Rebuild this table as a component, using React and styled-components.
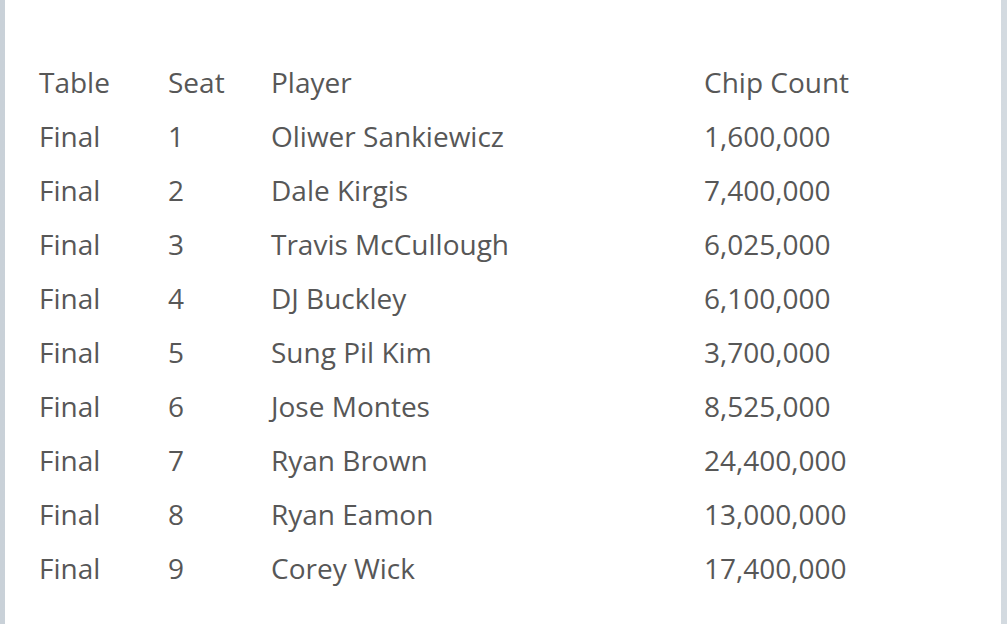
import React from "react"
import styled, { createGlobalStyle } from "styled-components"

const rows = [
  ["Final", "1", "Oliwer Sankiewicz", "1,600,000"],
  ["Final", "2", "Dale Kirgis", "7,400,000"],
  ["Final", "3", "Travis McCullough", "6,025,000"],
  ["Final", "4", "DJ Buckley", "6,100,000"],
  ["Final", "5", "Sung Pil Kim", "3,700,000"],
  ["Final", "6", "Jose Montes", "8,525,000"],
  ["Final", "7", "Ryan Brown", "24,400,000"],
  ["Final", "8", "Ryan Eamon", "13,000,000"],
  ["Final", "9", "Corey Wick", "17,400,000"],
]

const App = () => {
  return (
    <>
      <GlobalStyle />
      <Page>
        <Panel>
          <Table>
            <thead>
              <tr>
                <Cell as="th">Table</Cell>
                <Cell as="th">Seat</Cell>
                <Cell as="th">Player</Cell>
                <Cell as="th">Chip Count</Cell>
              </tr>
            </thead>
            <tbody>
              {rows.map((r, i) => (
                <tr key={i}>
                  {r.map((c, j) => (
                    <Cell key={j}>{c}</Cell>
                  ))}
                </tr>
              ))}
            </tbody>
          </Table>
        </Panel>
      </Page>
    </>
  )
}

export default App

const GlobalStyle = createGlobalStyle`
  body {
    margin: 0;
    background: #ccd4da;
  }
`

const Page = styled.div`
  display: flex;
  height: 624px;
  padding: 0 6px 0 5px;
  box-sizing: border-box;
  background: linear-gradient(to right, #c9d1d8, #d3dae0);
`

const Panel = styled.div`
  flex: 1;
  background: #ffffff;
  padding: 55px 0 0 34px;
`

const Table = styled.table`
  border-collapse: collapse;
  font-family: "Open Sans", sans-serif;
  font-size: 28px;
  color: #575757;
  table-layout: fixed;
  width: 900px;
`

const Cell = styled.td`
  height: 54px;
  padding: 0;
  text-align: left;
  font-weight: 400;
  vertical-align: middle;
  white-space: nowrap;
  &:nth-child(1) {
    width: 129px;
  }
  &:nth-child(2) {
    width: 103px;
  }
  &:nth-child(3) {
    width: 433px;
  }
`
